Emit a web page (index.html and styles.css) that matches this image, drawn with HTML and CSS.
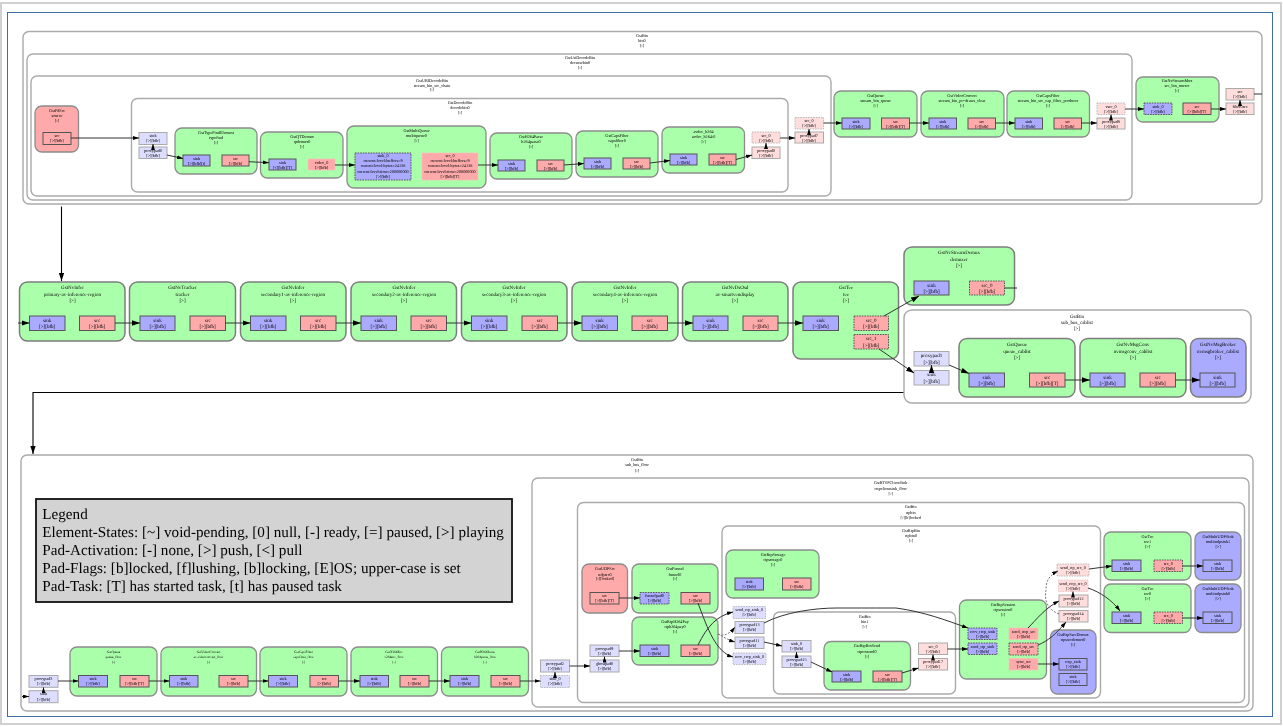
FILE: index.html
```html
<!doctype html>
<html>

<head>
	<title>Pipeline graph</title>
	<link rel="stylesheet" href="styles.css">
</head>

<body>
	<div class="outer">
		<div class="view">
			<svg class="graph" viewBox="8 13 1264 703" width="1264" height="703">
				<defs>
					<marker id="head" class="head" viewBox="0 0 6 4" refX="6" refY="2" markerWidth="6" markerHeight="4" markerUnits="userSpaceOnUse" orient="auto">
						<path d="M0,0 L6,2 L0,4 z"></path>
					</marker>
					<marker id="head-big" class="head" viewBox="0 0 6 4" refX="6" refY="2" markerWidth="8" markerHeight="5.4" markerUnits="userSpaceOnUse" orient="auto">
						<path d="M0,0 L6,2 L0,4 z"></path>
					</marker>
				</defs>

				<!-- top: source bin -->
				<g class="blurred">
					<g class="bin">
						<rect x="23" y="31.5" width="1239" height="172.5" rx="6"></rect>
						<text x="642" y="37">GstBin</text><text x="642" y="42">bin0</text><text x="642" y="47">[-]</text>
					</g>
					<g class="bin">
						<rect x="27" y="54" width="1105" height="146" rx="6"></rect>
						<text x="580" y="59.3">GstUriDecodeBin</text><text x="580" y="64.3">decursebin0</text><text x="580" y="69.3">[-]</text>
					</g>
					<g class="bin">
						<rect x="31" y="76" width="800" height="120" rx="6"></rect>
						<text x="432" y="82">GstURIDecodeBin</text><text x="432" y="86.6">stream_bin_src_chain</text><text x="432" y="91.3">[-]</text>
					</g>
					<g class="bin">
						<rect x="131.5" y="98.5" width="656.5" height="93.5" rx="6"></rect>
						<text x="460" y="104.3">GstDecodeBin</text><text x="460" y="109.3">decodebin0</text><text x="460" y="114.3">[-]</text>
					</g>

					<g class="el red">
						<rect x="35" y="106" width="43.5" height="46" rx="7"></rect>
						<text x="57" y="111.8">GstFdSrc</text><text x="57" y="116.8">source</text><text x="57" y="121.6">[-]</text>
					</g>
					<g class="pad src"><rect x="43" y="132.5" width="28" height="12"></rect><text x="57" y="137.2">src</text><text x="57" y="142.3">[&gt;][bfb]</text></g>

					<g class="pad gin"><rect x="139" y="132.5" width="28" height="12"></rect><text x="153" y="137.2">sink</text><text x="153" y="142.3">[&gt;][bfb]</text></g>
					<g class="pad gin"><rect x="139" y="147" width="28" height="11.5"></rect><text x="153" y="151.7">proxypad0</text><text x="153" y="156.8">[&gt;][bfb]</text></g>

					<g class="el">
						<rect x="175" y="128" width="82" height="46" rx="7"></rect>
						<text x="216" y="133.8">GstTypeFindElement</text><text x="216" y="138.8">typefind</text><text x="216" y="143.8">[-]</text>
					</g>
					<g class="pad sink"><rect x="183" y="155" width="27" height="11"></rect><text x="196.5" y="159.7">sink</text><text x="196.5" y="164.8">[&gt;][bfb][t]</text></g>
					<g class="pad src"><rect x="222" y="155" width="27" height="11"></rect><text x="235.5" y="159.7">src</text><text x="235.5" y="164.8">[&gt;][bfb]</text></g>

					<g class="el">
						<rect x="260.5" y="132" width="82.5" height="46" rx="7"></rect>
						<text x="302" y="137.8">GstQTDemux</text><text x="302" y="142.8">qtdemux0</text><text x="302" y="147.8">[-]</text>
					</g>
					<g class="pad sink"><rect x="269" y="159" width="27" height="11"></rect><text x="282.5" y="163.7">sink</text><text x="282.5" y="168.8">[&lt;][bfb][T]</text></g>
					<g class="pad src ghosted"><rect x="308" y="159" width="27" height="11"></rect><text x="321.5" y="163.7">video_0</text><text x="321.5" y="168.8">[&gt;][bfb]</text></g>

					<g class="el">
						<rect x="347" y="126" width="139" height="62" rx="7"></rect>
						<text x="416.5" y="131.8">GstMultiQueue</text><text x="416.5" y="136.8">multiqueue0</text><text x="416.5" y="141.8">[-]</text>
					</g>
					<g class="pad sink dash"><rect x="355" y="153" width="56" height="27"></rect><text x="383" y="156.8">sink_0</text><text x="383" y="162.3">current-level-buffers=9</text><text x="383" y="167.3">current-level-bytes=24136</text><text x="383" y="172.8">current-level-time=200000000</text><text x="383" y="178.3">[&gt;][bfb]</text></g>
					<g class="pad src ghosted"><rect x="422" y="153" width="56" height="27"></rect><text x="450" y="156.8">src_0</text><text x="450" y="162.3">current-level-buffers=9</text><text x="450" y="167.3">current-level-bytes=24136</text><text x="450" y="172.8">current-level-time=200000000</text><text x="450" y="178.3">[&gt;][bfb][T]</text></g>

					<g class="el">
						<rect x="490" y="133" width="82" height="46" rx="7"></rect>
						<text x="531" y="138.3">GstH264Parse</text><text x="531" y="143.3">h264parse0</text><text x="531" y="148.3">[-]</text>
					</g>
					<g class="pad sink"><rect x="498" y="160" width="27" height="11"></rect><text x="511.5" y="164.7">sink</text><text x="511.5" y="169.8">[&gt;][bfb]</text></g>
					<g class="pad src"><rect x="537" y="160" width="27" height="11"></rect><text x="550.5" y="164.7">src</text><text x="550.5" y="169.8">[&gt;][bfb]</text></g>

					<g class="el">
						<rect x="576" y="131" width="82" height="46" rx="7"></rect>
						<text x="617" y="136.8">GstCapsFilter</text><text x="617" y="141.8">capsfilter0</text><text x="617" y="146.8">[-]</text>
					</g>
					<g class="pad sink"><rect x="584" y="158" width="27" height="11"></rect><text x="597.5" y="162.7">sink</text><text x="597.5" y="167.8">[&gt;][bfb]</text></g>
					<g class="pad src"><rect x="623" y="158" width="27" height="11"></rect><text x="636.5" y="162.7">src</text><text x="636.5" y="167.8">[&gt;][bfb]</text></g>

					<g class="el">
						<rect x="662" y="127" width="82.5" height="46" rx="7"></rect>
						<text x="703.5" y="132.8">avdec_h264</text><text x="703.5" y="137.8">avdec_h264-0</text><text x="703.5" y="142.8">[-]</text>
					</g>
					<g class="pad sink"><rect x="670" y="154" width="27" height="11"></rect><text x="683.5" y="158.7">sink</text><text x="683.5" y="163.8">[&gt;][bfb]</text></g>
					<g class="pad src"><rect x="709" y="154" width="27" height="11"></rect><text x="722.5" y="158.7">src</text><text x="722.5" y="163.8">[&gt;][bfb][T]</text></g>

					<g class="pad gout dash"><rect x="752" y="132" width="28" height="11"></rect><text x="766" y="136.7">src_0</text><text x="766" y="141.8">[&gt;][bfb]</text></g>
					<g class="pad gout"><rect x="752" y="147" width="28" height="11.5"></rect><text x="766" y="151.7">proxypad0</text><text x="766" y="156.8">[&gt;][bfb]</text></g>
					<g class="pad gout dash"><rect x="795" y="117.5" width="28.5" height="11.5"></rect><text x="809" y="122.2">src_0</text><text x="809" y="127.3">[&gt;][bfb]</text></g>
					<g class="pad gout"><rect x="795" y="132" width="28.5" height="11"></rect><text x="809" y="136.7">proxypad7</text><text x="809" y="141.8">[&gt;][bfb]</text></g>

					<g class="el">
						<rect x="834" y="91" width="83" height="46" rx="7"></rect>
						<text x="875.5" y="96.8">GstQueue</text><text x="875.5" y="102">stream_bin_queue</text><text x="875.5" y="106.6">[-]</text>
					</g>
					<g class="pad sink"><rect x="842" y="118" width="28" height="11"></rect><text x="856" y="122.7">sink</text><text x="856" y="127.8">[&gt;][bfb]</text></g>
					<g class="pad src"><rect x="881.5" y="118" width="28" height="11"></rect><text x="895.5" y="122.7">src</text><text x="895.5" y="127.8">[&gt;][bfb][T]</text></g>

					<g class="el">
						<rect x="921" y="91" width="83" height="46" rx="7"></rect>
						<text x="962" y="96.8">GstVideoConvert</text><text x="962" y="102">stream_bin_pr+draws_clear</text><text x="962" y="106.6">[-]</text>
					</g>
					<g class="pad sink"><rect x="929" y="118" width="27.5" height="11"></rect><text x="942.7" y="122.7">sink</text><text x="942.7" y="127.8">[&gt;][bfb]</text></g>
					<g class="pad src"><rect x="968" y="118" width="27.5" height="11"></rect><text x="981.7" y="122.7">src</text><text x="981.7" y="127.8">[&gt;][bfb]</text></g>

					<g class="el">
						<rect x="1007" y="91" width="82.5" height="46" rx="7"></rect>
						<text x="1048" y="96.8">GstCapsFilter</text><text x="1048" y="102">stream_bin_src_cap_filter_producer</text><text x="1048" y="106.6">[-]</text>
					</g>
					<g class="pad sink"><rect x="1015" y="118" width="27.5" height="11"></rect><text x="1028.7" y="122.7">sink</text><text x="1028.7" y="127.8">[&gt;][bfb]</text></g>
					<g class="pad src"><rect x="1054" y="118" width="27.5" height="11"></rect><text x="1067.7" y="122.7">src</text><text x="1067.7" y="127.8">[&gt;][bfb]</text></g>

					<g class="pad gout dash"><rect x="1097" y="103" width="28" height="11.5"></rect><text x="1111" y="107.7">vsrc_0</text><text x="1111" y="112.8">[&gt;][bfb]</text></g>
					<g class="pad gout"><rect x="1097" y="118" width="28" height="11"></rect><text x="1111" y="122.7">proxypad8</text><text x="1111" y="127.8">[&gt;][bfb]</text></g>

					<g class="el">
						<rect x="1136" y="77" width="83" height="45" rx="7"></rect>
						<text x="1177" y="82.3">GstNvStreamMux</text><text x="1177" y="87.3">src_bin_muxer</text><text x="1177" y="92.3">[-]</text>
					</g>
					<g class="pad sink dash"><rect x="1144" y="103" width="28" height="11.5"></rect><text x="1158" y="107.7">sink_0</text><text x="1158" y="112.8">[&gt;][bfb]</text></g>
					<g class="pad src"><rect x="1183" y="103" width="28" height="11.5"></rect><text x="1197" y="107.7">src</text><text x="1197" y="112.8">[&gt;][bfb][T]</text></g>

					<g class="pad gout"><rect x="1226" y="88.5" width="28" height="11.5"></rect><text x="1240" y="93.2">src</text><text x="1240" y="98.3">[&gt;][bfb]</text></g>
					<g class="pad gout"><rect x="1226" y="103" width="28" height="11.5"></rect><text x="1240" y="107.7">filter0src</text><text x="1240" y="112.8">[&gt;][bfb]</text></g>

					<g class="edges">
						<path d="M71,138 L139,138"></path>
						<path d="M153,147 L153,144"></path>
						<path d="M167,155 L183,158.5"></path>
						<path d="M249,161.7 L269,162.7"></path>
						<path d="M335,165 L355,165"></path>
						<path d="M478,165 L498,165"></path>
						<path d="M564,165 L584,163.5"></path>
						<path d="M650,163 L670,160.5"></path>
						<path d="M736,159.5 L752,155"></path>
						<path d="M766,147 L766,143"></path>
						<path d="M780,138 L795,138"></path>
						<path d="M809,132 L809,129"></path>
						<path d="M823.5,123 L842,123"></path>
						<path d="M909.5,123 L929,123"></path>
						<path d="M995.5,123 L1015,123"></path>
						<path d="M1081.5,123 L1097,123"></path>
						<path d="M1111,118 L1111,114.5"></path>
						<path d="M1125,109 L1144,109"></path>
						<path d="M1211,109 L1226,109"></path>
						<path d="M1240,103 L1240,100"></path>
						<path class="plain" d="M1254,94 L1262,94"></path>
					</g>
				</g>

				<!-- links between the three rows -->
				<g class="links">
					<path d="M61.5,206.5 L61.5,281"></path>
					<path d="M904,392.5 L33,392.5 L33,454"></path>
				</g>

				<!-- middle row -->
				<g class="blurred big">
					<g class="el">
						<rect x="19.5" y="282" width="105.5" height="59" rx="8"></rect>
						<text x="72.5" y="289.4">GstNvInfer</text><text x="72.5" y="296">primary-av-inference-region</text><text x="72.5" y="302">[&gt;]</text>
					</g>
					<g class="pad sink"><rect x="29.5" y="316" width="35.5" height="14.5"></rect><text x="47.2" y="321.8">sink</text><text x="47.2" y="328">[&gt;][bfb]</text></g>
					<g class="pad src"><rect x="79.5" y="316" width="35.5" height="14.5"></rect><text x="97.2" y="321.8">src</text><text x="97.2" y="328">[&gt;][bfb]</text></g>

					<g class="el">
						<rect x="129.5" y="282" width="106" height="59" rx="8"></rect>
						<text x="182.5" y="289.4">GstNvTracker</text><text x="182.5" y="296">tracker</text><text x="182.5" y="302">[&gt;]</text>
					</g>
					<g class="pad sink"><rect x="140" y="316" width="35" height="14.5"></rect><text x="157.5" y="321.8">sink</text><text x="157.5" y="328">[&gt;][bfb]</text></g>
					<g class="pad src"><rect x="190" y="316" width="35.5" height="14.5"></rect><text x="207.7" y="321.8">src</text><text x="207.7" y="328">[&gt;][bfb]</text></g>

					<g class="el">
						<rect x="240.5" y="282" width="105.5" height="59" rx="8"></rect>
						<text x="293" y="289.4">GstNvInfer</text><text x="293" y="296">secondary1-av-inference-region</text><text x="293" y="302">[&gt;]</text>
					</g>
					<g class="pad sink"><rect x="250.5" y="316" width="35.5" height="14.5"></rect><text x="268.2" y="321.8">sink</text><text x="268.2" y="328">[&gt;][bfb]</text></g>
					<g class="pad src"><rect x="300.5" y="316" width="35.5" height="14.5"></rect><text x="318.2" y="321.8">src</text><text x="318.2" y="328">[&gt;][bfb]</text></g>

					<g class="el">
						<rect x="351" y="282" width="105.5" height="59" rx="8"></rect>
						<text x="404" y="289.4">GstNvInfer</text><text x="404" y="296">secondary2-av-inference-region</text><text x="404" y="302">[&gt;]</text>
					</g>
					<g class="pad sink"><rect x="361" y="316" width="35.5" height="14.5"></rect><text x="378.7" y="321.8">sink</text><text x="378.7" y="328">[&gt;][bfb]</text></g>
					<g class="pad src"><rect x="411" y="316" width="35.5" height="14.5"></rect><text x="428.7" y="321.8">src</text><text x="428.7" y="328">[&gt;][bfb]</text></g>

					<g class="el">
						<rect x="461.5" y="282" width="105.5" height="59" rx="8"></rect>
						<text x="514" y="289.4">GstNvInfer</text><text x="514" y="296">secondary3-av-inference-region</text><text x="514" y="302">[&gt;]</text>
					</g>
					<g class="pad sink"><rect x="471.5" y="316" width="35.5" height="14.5"></rect><text x="489.2" y="321.8">sink</text><text x="489.2" y="328">[&gt;][bfb]</text></g>
					<g class="pad src"><rect x="522" y="316" width="35.5" height="14.5"></rect><text x="539.7" y="321.8">src</text><text x="539.7" y="328">[&gt;][bfb]</text></g>

					<g class="el">
						<rect x="572" y="282" width="106" height="59" rx="8"></rect>
						<text x="625" y="289.4">GstNvInfer</text><text x="625" y="296">secondary4-av-inference-region</text><text x="625" y="302">[&gt;]</text>
					</g>
					<g class="pad sink"><rect x="582" y="316" width="35.5" height="14.5"></rect><text x="599.7" y="321.8">sink</text><text x="599.7" y="328">[&gt;][bfb]</text></g>
					<g class="pad src"><rect x="632" y="316" width="35.5" height="14.5"></rect><text x="649.7" y="321.8">src</text><text x="649.7" y="328">[&gt;][bfb]</text></g>

					<g class="el">
						<rect x="682.5" y="282" width="105.5" height="59" rx="8"></rect>
						<text x="735" y="289.4">GstNvDsOsd</text><text x="735" y="296">av-smartvendisplay</text><text x="735" y="302">[&gt;]</text>
					</g>
					<g class="pad sink"><rect x="693" y="316" width="35" height="14.5"></rect><text x="710.5" y="321.8">sink</text><text x="710.5" y="328">[&gt;][bfb]</text></g>
					<g class="pad src"><rect x="743" y="316" width="35" height="14.5"></rect><text x="760.5" y="321.8">src</text><text x="760.5" y="328">[&gt;][bfb]</text></g>

					<g class="el">
						<rect x="793" y="282" width="105.5" height="77" rx="8"></rect>
						<text x="846" y="289.4">GstTee</text><text x="846" y="296">tee</text><text x="846" y="302">[&gt;]</text>
					</g>
					<g class="pad sink"><rect x="803" y="316" width="35.5" height="14.5"></rect><text x="820.7" y="321.8">sink</text><text x="820.7" y="328">[&gt;][bfb]</text></g>
					<g class="pad src dash"><rect x="854" y="316" width="34.5" height="14.5"></rect><text x="871.2" y="321.8">src_0</text><text x="871.2" y="328">[&gt;][bfb]</text></g>
					<g class="pad src dash"><rect x="854" y="334.5" width="34.5" height="14.5"></rect><text x="871.2" y="340.3">src_1</text><text x="871.2" y="346.5">[&gt;][bfb]</text></g>

					<g class="el">
						<rect x="904" y="247" width="110.5" height="58" rx="8"></rect>
						<text x="959" y="254">GstNvStreamDemux</text><text x="959" y="260.7">demuxer</text><text x="959" y="266.7">[&gt;]</text>
					</g>
					<g class="pad sink"><rect x="914" y="281" width="35" height="14"></rect><text x="931.5" y="286.6">sink</text><text x="931.5" y="292.8">[&gt;][bfb]</text></g>
					<g class="pad src dash"><rect x="969.5" y="281" width="35" height="14"></rect><text x="987" y="286.6">src_0</text><text x="987" y="292.8">[&gt;][bfb]</text></g>

					<g class="bin">
						<rect x="904" y="310" width="347" height="93" rx="8"></rect>
						<text x="1077" y="317.7">GstBin</text><text x="1077" y="323.7">sub_bus_cablist</text><text x="1077" y="330">[&gt;]</text>
					</g>
					<g class="pad gin"><rect x="914" y="351.5" width="35" height="14.5"></rect><text x="931.5" y="357.3">proxypad1</text><text x="931.5" y="363.5">[&gt;][bfb]</text></g>
					<g class="pad gin"><rect x="914" y="370.5" width="35" height="14.5"></rect><text x="931.5" y="376.3">sink</text><text x="931.5" y="382.5">[&gt;][bfb]</text></g>

					<g class="el">
						<rect x="959" y="338.5" width="116" height="58.5" rx="8"></rect>
						<text x="1017" y="346.4">GstQueue</text><text x="1017" y="352.7">queue_cablist</text><text x="1017" y="358.7">[&gt;]</text>
					</g>
					<g class="pad sink"><rect x="969" y="373" width="35.5" height="14"></rect><text x="986.7" y="378.6">sink</text><text x="986.7" y="384.8">[&gt;][bfb]</text></g>
					<g class="pad src"><rect x="1029.5" y="373" width="35.5" height="14"></rect><text x="1047.2" y="378.6">src</text><text x="1047.2" y="384.8">[&gt;][bfb][T]</text></g>

					<g class="el">
						<rect x="1080" y="338.5" width="106" height="58.5" rx="8"></rect>
						<text x="1133" y="346.4">GstNvMsgConv</text><text x="1133" y="352.7">nvmsgconv_cablist</text><text x="1133" y="358.7">[&gt;]</text>
					</g>
					<g class="pad sink"><rect x="1090" y="373" width="35" height="14"></rect><text x="1107.5" y="378.6">sink</text><text x="1107.5" y="384.8">[&gt;][bfb]</text></g>
					<g class="pad src"><rect x="1140" y="373" width="35.5" height="14"></rect><text x="1157.7" y="378.6">src</text><text x="1157.7" y="384.8">[&gt;][bfb]</text></g>

					<g class="el blue">
						<rect x="1190.5" y="338.5" width="55.5" height="58.5" rx="8"></rect>
						<text x="1218" y="346.4">GstNvMsgBroker</text><text x="1218" y="352.7">nvmsgbroker_cablist</text><text x="1218" y="358.7">[&gt;]</text>
					</g>
					<g class="pad sink"><rect x="1200" y="373" width="35" height="14"></rect><text x="1217.5" y="378.6">sink</text><text x="1217.5" y="384.8">[&gt;][bfb]</text></g>

					<g class="edges">
						<path d="M18,323 L29.5,323"></path>
						<path d="M115,323 L140,323"></path>
						<path d="M225.5,323 L250.5,323"></path>
						<path d="M336,323 L361,323"></path>
						<path d="M446.5,323 L471.5,323"></path>
						<path d="M557.5,323 L582,323"></path>
						<path d="M667.5,323 L693,323"></path>
						<path d="M778,323 L803,323"></path>
						<path d="M884,316 L919,296"></path>
						<path class="plain" d="M1004.5,288 L1017,288"></path>
						<path d="M879,349 L914,373"></path>
						<path d="M931.5,370.5 L931.5,365"></path>
						<path d="M949,365 L969,373.5"></path>
						<path d="M1065,380 L1090,380"></path>
						<path d="M1175.5,380 L1200,380"></path>
					</g>
				</g>

				<!-- bottom: sink bin -->
				<g class="blurred">
					<g class="bin">
						<rect x="21" y="455" width="1232" height="256" rx="6"></rect>
						<text x="637" y="461">GstBin</text><text x="637" y="466.3">sub_bus_flow</text><text x="637" y="471.5">[-]</text>
					</g>
					<g class="bin">
						<rect x="532" y="478" width="717" height="229" rx="6"></rect>
						<text x="890.7" y="484.3">GstRTSPClientSink</text><text x="890.7" y="490">rtspclientsink_flow</text><text x="890.7" y="495.3">[-]</text>
					</g>
					<g class="bin">
						<rect x="577.5" y="502.5" width="667" height="200" rx="6"></rect>
						<text x="910.7" y="508.3">GstBin</text><text x="910.7" y="514">rtpbin</text><text x="910.7" y="519">[-][b]locked</text>
					</g>
					<g class="bin">
						<rect x="722" y="526" width="378.5" height="172" rx="6"></rect>
						<text x="911" y="532.3">GstRtpBin</text><text x="911" y="537.3">rtpbin0</text><text x="911" y="542.3">[-]</text>
					</g>
					<g class="bin">
						<rect x="773.5" y="612" width="182" height="82" rx="6"></rect>
						<text x="864.7" y="618.3">GstBin</text><text x="864.7" y="623.3">bin1</text><text x="864.7" y="628.3">[-]</text>
					</g>

					<g class="pad gin"><rect x="29" y="675.5" width="29" height="11.8"></rect><text x="43.5" y="680.2">proxypad3</text><text x="43.5" y="685.3">[&gt;][bfb]</text></g>
					<g class="pad gin"><rect x="29" y="690.7" width="29" height="12"></rect><text x="43.5" y="695.4">sink</text><text x="43.5" y="700.5">[&gt;][bfb]</text></g>

					<g class="el small">
						<rect x="70" y="647" width="87" height="49" rx="7"></rect>
						<text x="113.5" y="652.5">GstQueue</text><text x="113.5" y="658">queue_flow</text><text x="113.5" y="663">[-]</text>
					</g>
					<g class="pad sink"><rect x="78.5" y="675.5" width="29" height="11.5"></rect><text x="93" y="680.2">sink</text><text x="93" y="685.3">[&gt;][bfb]</text></g>
					<g class="pad src"><rect x="120" y="675.5" width="29" height="11.5"></rect><text x="134.5" y="680.2">src</text><text x="134.5" y="685.3">[&gt;][bfb][T]</text></g>

					<g class="el small">
						<rect x="161" y="647" width="95.5" height="49" rx="7"></rect>
						<text x="208.5" y="652.5">GstVideoConvert</text><text x="208.5" y="658">av-videoconvert_flow</text><text x="208.5" y="663">[-]</text>
					</g>
					<g class="pad sink"><rect x="169.5" y="675.5" width="28.5" height="11.5"></rect><text x="183.7" y="680.2">sink</text><text x="183.7" y="685.3">[&gt;][bfb]</text></g>
					<g class="pad src"><rect x="219" y="675.5" width="29" height="11.5"></rect><text x="233.5" y="680.2">src</text><text x="233.5" y="685.3">[&gt;][bfb]</text></g>

					<g class="el small">
						<rect x="260" y="647" width="87" height="49" rx="7"></rect>
						<text x="303.5" y="652.5">GstCapsFilter</text><text x="303.5" y="658">capsfilter_flow</text><text x="303.5" y="663">[-]</text>
					</g>
					<g class="pad sink"><rect x="268.5" y="675.5" width="29" height="11.5"></rect><text x="283" y="680.2">sink</text><text x="283" y="685.3">[&gt;][bfb]</text></g>
					<g class="pad src"><rect x="310" y="675.5" width="28.5" height="11.5"></rect><text x="324.2" y="680.2">src</text><text x="324.2" y="685.3">[&gt;][bfb]</text></g>

					<g class="el small">
						<rect x="351" y="647" width="86.5" height="49" rx="7"></rect>
						<text x="394" y="652.5">GstX264Enc</text><text x="394" y="658">x264enc_flow</text><text x="394" y="663">[-]</text>
					</g>
					<g class="pad sink"><rect x="360" y="675.5" width="28.5" height="11.5"></rect><text x="374.2" y="680.2">sink</text><text x="374.2" y="685.3">[&gt;][bfb]</text></g>
					<g class="pad src"><rect x="400" y="675.5" width="29" height="11.5"></rect><text x="414.5" y="680.2">src</text><text x="414.5" y="685.3">[&gt;][bfb]</text></g>

					<g class="el small">
						<rect x="441.5" y="647" width="87" height="49" rx="7"></rect>
						<text x="485" y="652.5">GstH264Parse</text><text x="485" y="658">h264parse_flow</text><text x="485" y="663">[-]</text>
					</g>
					<g class="pad sink"><rect x="450" y="675.5" width="29" height="11.5"></rect><text x="464.5" y="680.2">sink</text><text x="464.5" y="685.3">[&gt;][bfb]</text></g>
					<g class="pad src"><rect x="491" y="675.5" width="29" height="11.5"></rect><text x="505.5" y="680.2">src</text><text x="505.5" y="685.3">[&gt;][bfb]</text></g>

					<g class="pad gin"><rect x="540.5" y="660" width="29" height="12"></rect><text x="555" y="664.7">proxypad2</text><text x="555" y="669.8">[&gt;][bfb]</text></g>
					<g class="pad gin dash"><rect x="540.5" y="675.5" width="29" height="12"></rect><text x="555" y="680.2">sink_0</text><text x="555" y="685.3">[&gt;][bfb]</text></g>
					<g class="pad gin"><rect x="590" y="645" width="29" height="11.5"></rect><text x="604.5" y="649.7">proxypad9</text><text x="604.5" y="654.8">[&gt;][bfb]</text></g>
					<g class="pad gin"><rect x="590" y="660" width="29" height="12"></rect><text x="604.5" y="664.7">ghostpad0</text><text x="604.5" y="669.8">[&gt;][bfb]</text></g>

					<g class="el red">
						<rect x="582" y="564" width="45.5" height="49" rx="7"></rect>
						<text x="605" y="570.3">GstUDPSrc</text><text x="605" y="575.8">udpsrc0</text><text x="605" y="580.3">[-][locked]</text>
					</g>
					<g class="pad src"><rect x="590" y="592.5" width="29" height="11.5"></rect><text x="604.5" y="597.2">src</text><text x="604.5" y="602.3">[&gt;][bfb][T]</text></g>

					<g class="el">
						<rect x="632" y="564" width="86" height="49" rx="7"></rect>
						<text x="675" y="570.3">GstFunnel</text><text x="675" y="575.8">funnel0</text><text x="675" y="580.3">[-]</text>
					</g>
					<g class="pad sink dash"><rect x="640" y="592.5" width="29" height="11.5"></rect><text x="654.5" y="597.2">funnelpad0</text><text x="654.5" y="602.3">[&gt;][bfb]</text></g>
					<g class="pad src"><rect x="681" y="592.5" width="29" height="11.5"></rect><text x="695.5" y="597.2">src</text><text x="695.5" y="602.3">[&gt;][bfb]</text></g>

					<g class="el">
						<rect x="632" y="617" width="86" height="48" rx="7"></rect>
						<text x="675" y="622.6">GstRtpH264Pay</text><text x="675" y="628">rtph264pay0</text><text x="675" y="633">[-]</text>
					</g>
					<g class="pad sink"><rect x="640" y="645" width="29" height="11.5"></rect><text x="654.5" y="649.7">sink</text><text x="654.5" y="654.8">[&gt;][bfb]</text></g>
					<g class="pad src"><rect x="681" y="645" width="29" height="11.5"></rect><text x="695.5" y="649.7">src</text><text x="695.5" y="654.8">[&gt;][bfb]</text></g>

					<g class="el">
						<rect x="726" y="550" width="93" height="48" rx="7"></rect>
						<text x="773" y="556.3">GstRtpStorage</text><text x="773" y="561.3">rtpstorage0</text><text x="773" y="566.3">[-]</text>
					</g>
					<g class="pad sink"><rect x="735" y="578" width="28.5" height="12"></rect><text x="749.2" y="582.7">sink</text><text x="749.2" y="587.8">[&gt;][bfb]</text></g>
					<g class="pad src"><rect x="782.5" y="578" width="28.5" height="12"></rect><text x="796.7" y="582.7">src</text><text x="796.7" y="587.8">[&gt;][bfb]</text></g>

					<g class="pad gin dash"><rect x="733" y="606.5" width="32.5" height="12"></rect><text x="749.2" y="611.2">send_rtp_sink_0</text><text x="749.2" y="616.3">[&gt;][bfb]</text></g>
					<g class="pad gin"><rect x="735" y="621.5" width="29" height="12"></rect><text x="749.5" y="626.2">proxypad13</text><text x="749.5" y="631.3">[&gt;][bfb]</text></g>
					<g class="pad gin"><rect x="735" y="637" width="29" height="11.5"></rect><text x="749.5" y="641.7">proxypad11</text><text x="749.5" y="646.8">[&gt;][bfb]</text></g>
					<g class="pad gin dash"><rect x="733" y="653" width="33" height="11.5"></rect><text x="749.5" y="657.7">recv_rtcp_sink_0</text><text x="749.5" y="662.8">[&gt;][bfb]</text></g>

					<g class="pad gin"><rect x="782" y="640.5" width="29" height="11.5"></rect><text x="796.5" y="645.2">sink_0</text><text x="796.5" y="650.3">[&gt;][bfb]</text></g>
					<g class="pad gin"><rect x="782" y="656" width="29" height="11.5"></rect><text x="796.5" y="660.7">proxypad15</text><text x="796.5" y="665.8">[&gt;][bfb]</text></g>

					<g class="el">
						<rect x="824" y="641.5" width="86.5" height="48.5" rx="7"></rect>
						<text x="867" y="647.3">GstRtpRtxSend</text><text x="867" y="652.8">rtprtxsend0</text><text x="867" y="657.8">[-]</text>
					</g>
					<g class="pad sink"><rect x="832" y="671" width="29" height="11"></rect><text x="846.5" y="675.7">sink</text><text x="846.5" y="680.8">[&gt;][bfb]</text></g>
					<g class="pad src"><rect x="873" y="671" width="29" height="11"></rect><text x="887.5" y="675.7">src</text><text x="887.5" y="680.8">[&gt;][bfb][T]</text></g>

					<g class="pad gout"><rect x="918.5" y="643" width="29" height="11.5"></rect><text x="933" y="647.7">src_0</text><text x="933" y="652.8">[&gt;][bfb]</text></g>
					<g class="pad gout"><rect x="918.5" y="658.5" width="29" height="11.5"></rect><text x="933" y="663.2">proxypad17</text><text x="933" y="668.3">[&gt;][bfb]</text></g>

					<g class="el">
						<rect x="959.5" y="600" width="87" height="79" rx="7"></rect>
						<text x="1003" y="605.8">GstRtpSession</text><text x="1003" y="611.3">rtpsession0</text><text x="1003" y="616.3">[-]</text>
					</g>
					<g class="pad sink dash"><rect x="968" y="628" width="29" height="11.5"></rect><text x="982.5" y="632.7">recv_rtcp_sink</text><text x="982.5" y="637.8">[&gt;][bfb]</text></g>
					<g class="pad sink dash"><rect x="968" y="643" width="29" height="11.5"></rect><text x="982.5" y="647.7">send_rtp_sink</text><text x="982.5" y="652.8">[&gt;][bfb]</text></g>
					<g class="pad src ghosted"><rect x="1009" y="628" width="29" height="11.5"></rect><text x="1023.5" y="632.7">send_rtcp_src</text><text x="1023.5" y="637.8">[&gt;][bfb]</text></g>
					<g class="pad src dash"><rect x="1009" y="643" width="29" height="12"></rect><text x="1023.5" y="647.7">send_rtp_src</text><text x="1023.5" y="652.8">[&gt;][bfb]</text></g>
					<g class="pad src ghosted"><rect x="1009" y="658.5" width="29" height="11.5"></rect><text x="1023.5" y="663.2">sync_src</text><text x="1023.5" y="668.3">[&gt;][bfb]</text></g>

					<g class="el blue">
						<rect x="1050.5" y="630" width="45.5" height="64" rx="7"></rect>
						<text x="1073" y="636.3">GstRtpSsrcDemux</text><text x="1073" y="641.3">rtpssrcdemux0</text><text x="1073" y="646.3">[-]</text>
					</g>
					<g class="pad sink"><rect x="1059" y="658.5" width="28" height="11.5"></rect><text x="1073" y="663.2">rtcp_sink</text><text x="1073" y="668.3">[&gt;][bfb]</text></g>
					<g class="pad sink"><rect x="1059" y="673.5" width="28" height="12"></rect><text x="1073" y="678.2">sink</text><text x="1073" y="683.3">[&gt;][bfb]</text></g>

					<g class="pad gout dash"><rect x="1057" y="564" width="32" height="12"></rect><text x="1073" y="568.7">send_rtp_src_0</text><text x="1073" y="573.8">[&gt;][bfb]</text></g>
					<g class="pad gout ghosted"><rect x="1058.5" y="580" width="29.5" height="11.5"></rect><text x="1073" y="584.7">send_rtcp_src_0</text><text x="1073" y="589.8">[&gt;][bfb]</text></g>
					<g class="pad gout"><rect x="1059" y="595" width="29" height="12"></rect><text x="1073.5" y="599.7">proxypad12</text><text x="1073.5" y="604.8">[&gt;][bfb]</text></g>
					<g class="pad gout"><rect x="1059" y="610.5" width="29" height="11.5"></rect><text x="1073.5" y="615.2">proxypad14</text><text x="1073.5" y="620.3">[&gt;][bfb]</text></g>

					<g class="el">
						<rect x="1104" y="532" width="87" height="48" rx="7"></rect>
						<text x="1147.5" y="537.5">GstTee</text><text x="1147.5" y="543.3">tee1</text><text x="1147.5" y="548">[&gt;]</text>
					</g>
					<g class="pad sink"><rect x="1112" y="560" width="29" height="11.5"></rect><text x="1126.5" y="564.7">sink</text><text x="1126.5" y="569.8">[&gt;][bfb]</text></g>
					<g class="pad src dash"><rect x="1154" y="560" width="28.5" height="11.5"></rect><text x="1168.2" y="564.7">src_0</text><text x="1168.2" y="569.8">[&gt;][bfb]</text></g>

					<g class="el">
						<rect x="1104" y="584" width="87" height="48.5" rx="7"></rect>
						<text x="1147.5" y="590">GstTee</text><text x="1147.5" y="595.3">tee0</text><text x="1147.5" y="600">[&gt;]</text>
					</g>
					<g class="pad sink"><rect x="1112" y="612" width="29" height="11.5"></rect><text x="1126.5" y="616.7">sink</text><text x="1126.5" y="621.8">[&gt;][bfb]</text></g>
					<g class="pad src dash"><rect x="1154" y="612" width="28.5" height="11.5"></rect><text x="1168.2" y="616.7">src_0</text><text x="1168.2" y="621.8">[&gt;][bfb]</text></g>

					<g class="el blue">
						<rect x="1195" y="532" width="46" height="48" rx="7"></rect>
						<text x="1218" y="537.5">GstMultiUDPSink</text><text x="1218" y="543.3">multiudpsink1</text><text x="1218" y="548">[&gt;]</text>
					</g>
					<g class="pad sink"><rect x="1203" y="560" width="29" height="11.5"></rect><text x="1217.5" y="564.7">sink</text><text x="1217.5" y="569.8">[&gt;][bfb]</text></g>

					<g class="el blue">
						<rect x="1195" y="584" width="46" height="48.5" rx="7"></rect>
						<text x="1218" y="590">GstMultiUDPSink</text><text x="1218" y="595.3">multiudpsink0</text><text x="1218" y="600">[&gt;]</text>
					</g>
					<g class="pad sink"><rect x="1203" y="612" width="29" height="11.5"></rect><text x="1217.5" y="616.7">sink</text><text x="1217.5" y="621.8">[&gt;][bfb]</text></g>

					<g class="edges">
						<path d="M22,696.5 L29,696.5"></path>
						<path d="M43.5,690.7 L43.5,687.3"></path>
						<path d="M58,681 L78.5,681"></path>
						<path d="M149,681 L169.5,681"></path>
						<path d="M248,681 L268.5,681"></path>
						<path d="M338.5,681 L360,681"></path>
						<path d="M429,681 L450,681"></path>
						<path d="M520,681 L540.5,681"></path>
						<path d="M555,675.5 L555,672"></path>
						<path d="M569.5,666 L590,666"></path>
						<path d="M604.5,660 L604.5,656.5"></path>
						<path d="M619,651 L640,651"></path>
						<path d="M619,598 L640,598"></path>
						<path d="M698,603 C708,630 716,652 733,657"></path>
						<path d="M698,645 C707,627 716,616 733,612"></path>
						<path class="dashed" d="M718,634 C722,636 728,636 735,627"></path>
						<path class="dashed" d="M718,634 C722,636 728,640 735,642"></path>
						<path d="M764,623 C785,612 815,608 837,608 C860,608 880,608 896,608 C925,612 945,620 968,628"></path>
						<path d="M764,642 L782,646"></path>
						<path d="M811,662 L832,672"></path>
						<path d="M796.5,656 L796.5,652"></path>
						<path d="M902,673 L918.5,668"></path>
						<path d="M933,658.5 L933,654.5"></path>
						<path d="M947.5,649 L968,649"></path>
						<path d="M1028,628 C1036,620 1045,608 1059,601"></path>
						<path d="M1038,645 C1048,641 1056,634 1066,622"></path>
						<path d="M1038,664 L1059,664"></path>
						<path class="dashed" d="M1059,614 C1044,608 1045,596 1046,590 C1046,582 1048,576 1058,571"></path>
						<path d="M1073,595 L1073,591.5"></path>
						<path d="M1089,569 L1112,566"></path>
						<path d="M1088,588 C1100,592 1112,600 1120,611"></path>
						<path d="M1182.5,566 L1203,566"></path>
						<path d="M1182.5,618 L1203,618"></path>
					</g>
				</g>

				<!-- legend -->
				<g class="legend">
					<rect x="36" y="499" width="476" height="103"></rect>
					<text x="42.3" y="518.5">Legend</text>
					<text x="42.3" y="536.7">Element-States: [~] void-pending, [0] null, [-] ready, [=] paused, [&gt;] playing</text>
					<text x="42.3" y="554.9">Pad-Activation: [-] none, [&gt;] push, [&lt;] pull</text>
					<text x="42.3" y="573.1">Pad-Flags: [b]locked, [f]lushing, [b]locking, [E]OS; upper-case is set</text>
					<text x="42.3" y="591.3">Pad-Task: [T] has started task, [t] has paused task</text>
				</g>
			</svg>
		</div>
	</div>
</body>

</html>
```
FILE: styles.css
```css
* { margin: 0; padding: 0; box-sizing: border-box; }
body { background-color: #fff; padding-top: 2px; font-family: "Liberation Serif", serif; }
.outer { width: 1282px; height: 723px; border: 2px solid #d0d0d0; padding: 8px 7px 6px 5px; }
.view { width: 1266px; height: 705px; border: 1px solid #3a6ea5; }
.graph { display: block; text-rendering: geometricPrecision; }
.graph text { font-family: "Liberation Serif", serif; font-size: 4.2px; text-anchor: middle; fill: #000; }
.blurred { filter: blur(0.3px); }
.big text { font-size: 5px; }
.bin rect { fill: #fff; stroke: #aaa; stroke-width: 1.4; }
.el rect { fill: #aaffaa; stroke: #8c8c8c; stroke-width: 1.3; }
.big .el rect { stroke: #7d7d7d; stroke-width: 1.5; }
.el.red rect { fill: #ffaaaa; }
.el.blue rect { fill: #aaaaff; }
.el.small text { font-size: 3.4px; }
.pad rect { stroke: #555; stroke-width: 1; }
.pad.sink rect { fill: #aaaaff; }
.pad.src rect { fill: #ffaaaa; }
.pad.gin rect { fill: #ddddff; stroke: #aaa; }
.pad.gout rect { fill: #ffdddd; stroke: #aaa; }
.pad.dash rect { stroke-dasharray: 1.6 1; }
.pad.gin.dash rect, .pad.gout.dash rect { stroke: #bbb; }
.pad.ghosted rect { stroke: #ffbcbc; stroke-dasharray: 1.6 1; }
.pad.gout.ghosted rect { stroke: #f0c8c8; }
.head path { fill: #000; stroke: none; }
.edges path { fill: none; stroke: #333; stroke-width: 1; marker-end: url(#head); }
.big .edges path { marker-end: url(#head-big); }
.edges path.plain, .big .edges path.plain { marker-end: none; }
.edges path.dashed { stroke: #777; stroke-dasharray: 2 1.5; }
.links path { fill: none; stroke: #000; stroke-width: 1.1; marker-end: url(#head-big); }
.legend { filter: blur(0.25px); }
.legend rect { fill: #d3d3d3; stroke: #111; stroke-width: 1.8; }
.legend text { font-size: 15.15px; text-anchor: start; }
```
